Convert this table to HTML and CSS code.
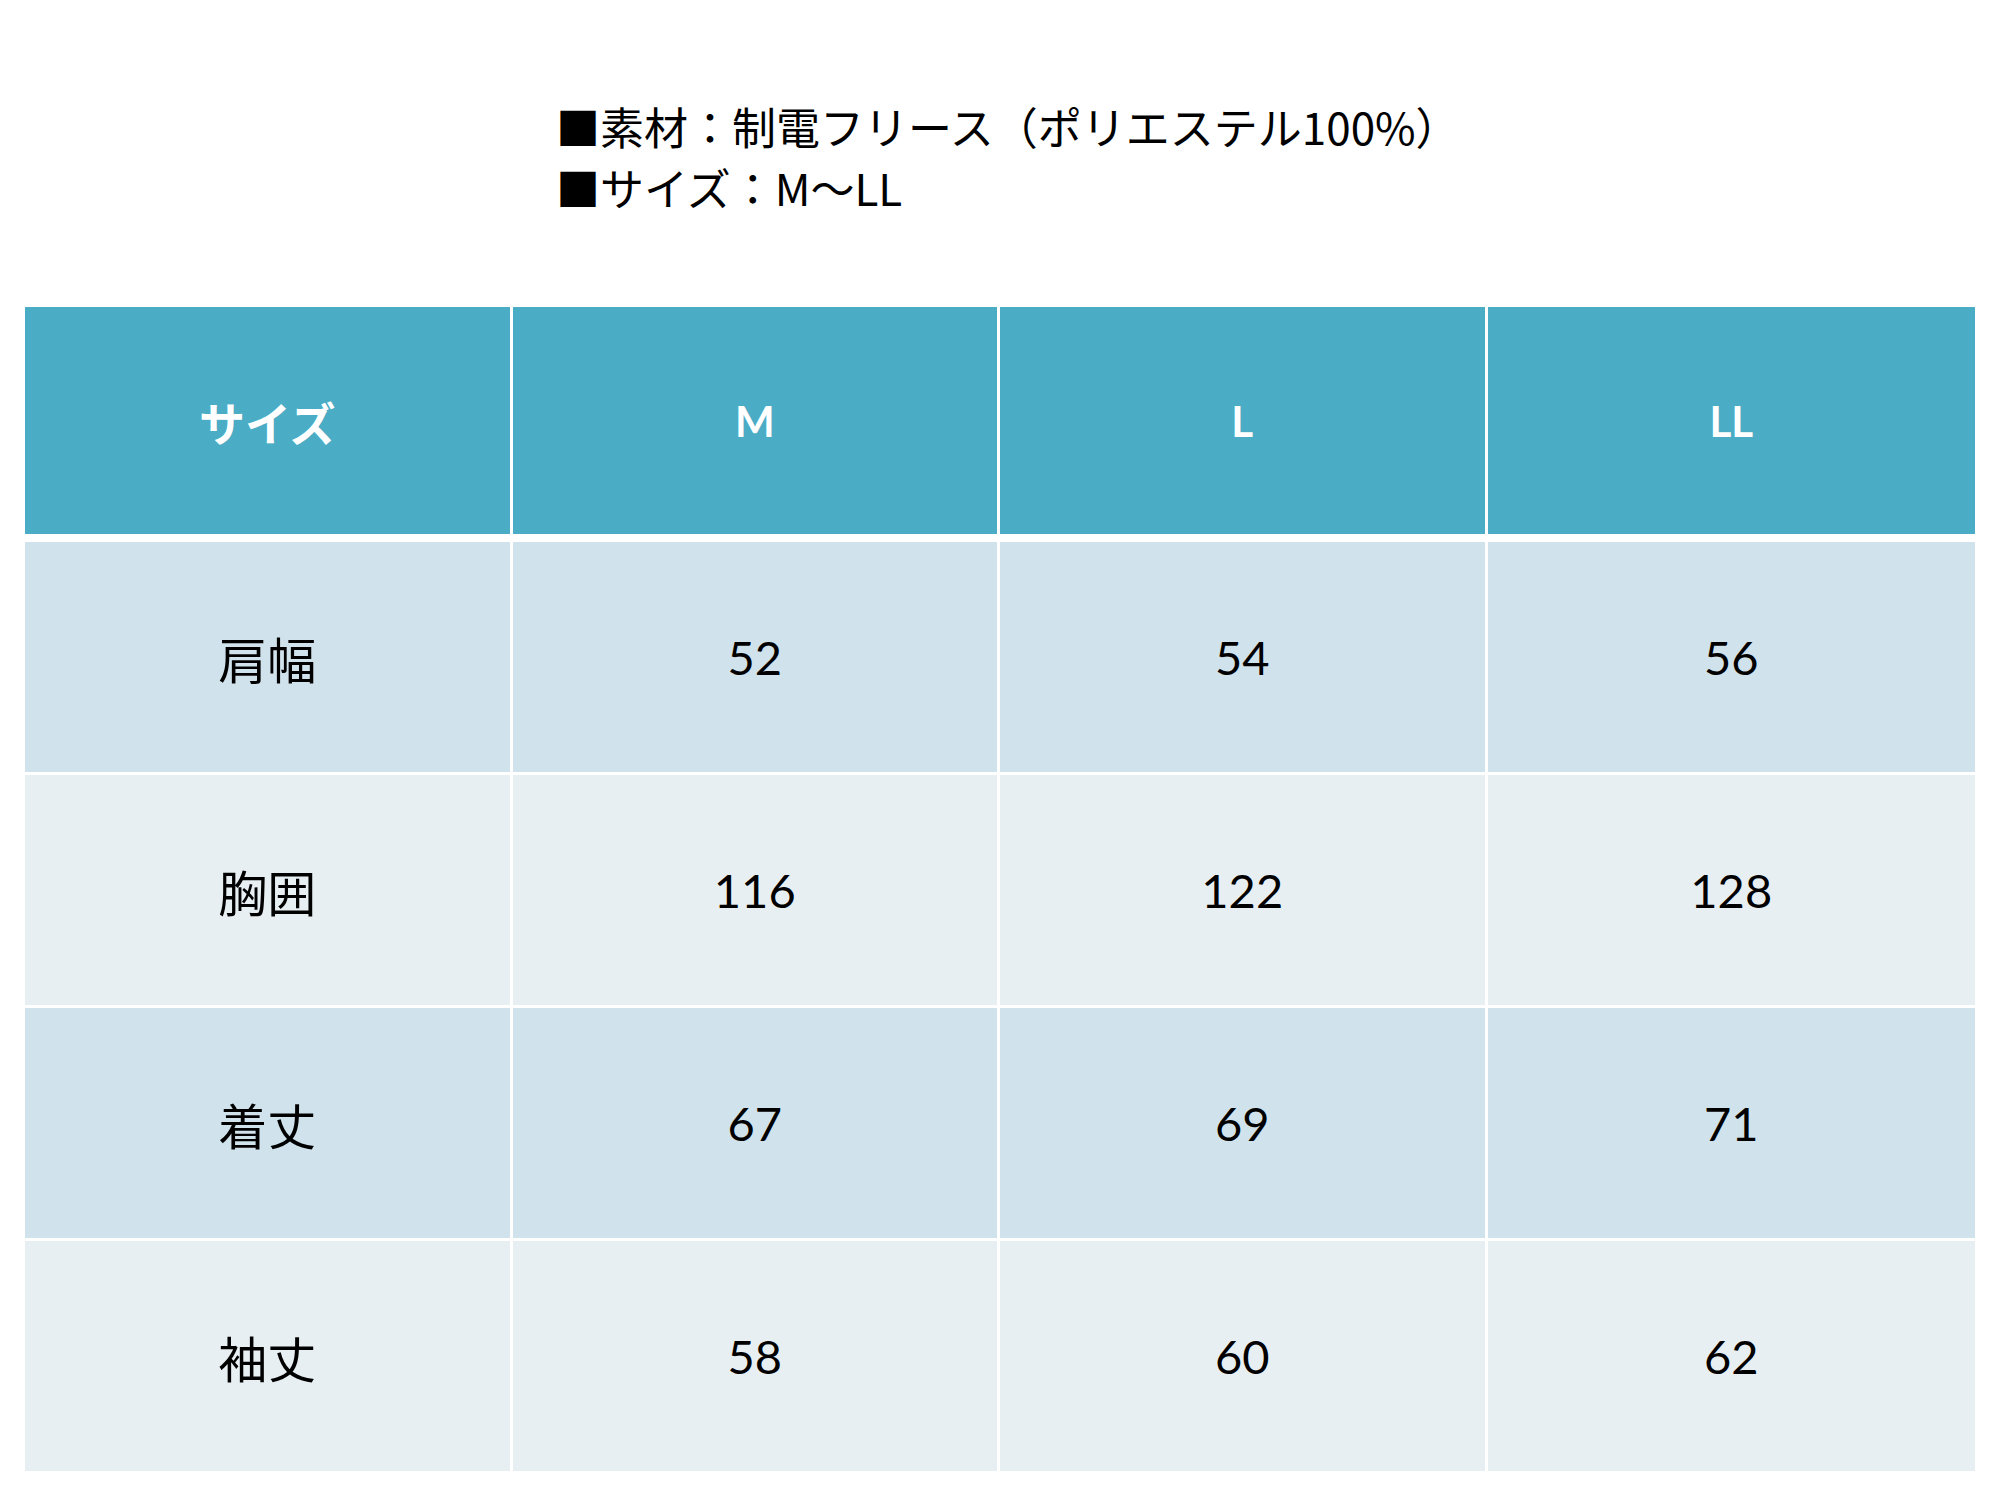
FILE: index.html
```html
<!DOCTYPE html>
<html lang="ja">
<head>
<meta charset="utf-8">
<title>サイズ表</title>
<link rel="stylesheet" href="styles.css">
</head>
<body>
<div class="page">
  <div class="spec">
    <p class="spec-line">■素材：制電フリース（ポリエステル100%）</p>
    <p class="spec-line">■サイズ：M～LL</p>
  </div>
  <table class="size-table">
    <colgroup><col><col><col><col></colgroup>
    <thead>
      <tr>
        <th class="ja-head">サイズ</th>
        <th>M</th>
        <th>L</th>
        <th>LL</th>
      </tr>
    </thead>
    <tbody>
      <tr class="band1">
        <td class="label">肩幅</td><td>52</td><td>54</td><td>56</td>
      </tr>
      <tr class="band2">
        <td class="label">胸囲</td><td>116</td><td>122</td><td>128</td>
      </tr>
      <tr class="band1">
        <td class="label">着丈</td><td>67</td><td>69</td><td>71</td>
      </tr>
      <tr class="band2">
        <td class="label">袖丈</td><td>58</td><td>60</td><td>62</td>
      </tr>
    </tbody>
  </table>
</div>
</body>
</html>
```

FILE: styles.css
```css
html, body {
  margin: 0;
  padding: 0;
  background: #ffffff;
}

.page {
  width: 2000px;
  font-family: Lato, "Noto Sans CJK JP", sans-serif;
  color: #000000;
}

.spec {
  padding: 96px 0 0 556px;
  height: 307px;
  box-sizing: border-box;
  font-family: "Noto Sans CJK JP", sans-serif;
}

.spec-line {
  margin: 0;
  font-size: 44px;
  line-height: 61px;
  letter-spacing: 0;
  white-space: nowrap;
}

.size-table {
  margin-left: 25px;
  width: 1950px;
  table-layout: fixed;
  border-collapse: separate;
  border-spacing: 0;
}

.size-table col {
  width: 25%;
}

.size-table th,
.size-table td {
  padding: 0;
  text-align: center;
  vertical-align: middle;
  border-right: 3px solid #ffffff;
}

.size-table th:last-child,
.size-table td:last-child {
  border-right: none;
}

.size-table th {
  height: 227px;
  background: #4bacc6;
  color: #ffffff;
  font-weight: 700;
  font-size: 42px;
  border-bottom: 8px solid #ffffff;
}

.size-table th.ja-head {
  font-size: 46px;
}

.size-table td {
  height: 230px;
  font-size: 47px;
  font-weight: 400;
  border-bottom: 3px solid #ffffff;
}

.size-table tbody tr:last-child td {
  border-bottom: none;
}

.size-table td.label {
  font-size: 49px;
}

.band1 td {
  background: #d0e2eb;
}

.band2 td {
  background: #e8eff3;
}
```
